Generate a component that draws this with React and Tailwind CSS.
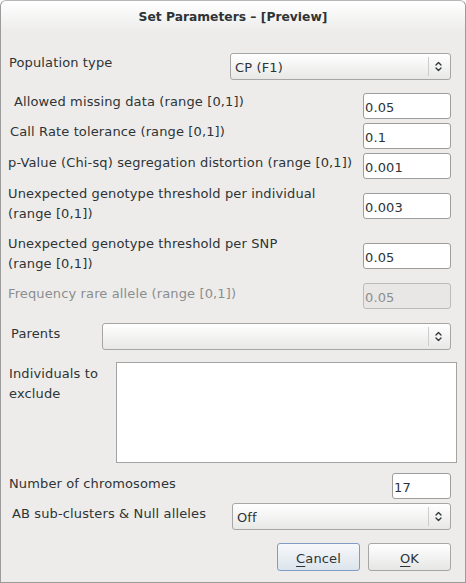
import React from "react";

function Arrows() {
  return (
    <svg width="7" height="11" viewBox="0 0 7 11" fill="none" stroke="#2e3436" strokeWidth="1.3" strokeLinecap="round" strokeLinejoin="round">
      <path d="M1 4 L3.5 1.5 L6 4" />
      <path d="M1 7 L3.5 9.5 L6 7" />
    </svg>
  );
}

function Combo({ value, className }) {
  return (
    <div className={`flex h-[27px] rounded-[3px] border border-[#a6a6a6] bg-gradient-to-b from-white to-[#e8e8e7] ${className}`}>
      <div className="flex-1 pl-[4px] pt-[6px] leading-[16px]">{value}</div>
      <div className="my-[3px] w-px bg-[#cdcdcd]" />
      <div className="flex w-[21px] items-center justify-center pr-[2px]">
        <Arrows />
      </div>
    </div>
  );
}

function Field({ value, className = "w-[88px]", disabled }) {
  return (
    <input
      readOnly
      disabled={disabled}
      value={value}
      className={`h-[26px] rounded-[3px] border px-[1px] pt-[5px] pb-[3px] text-[13px] leading-[16px] tracking-[0.13px] outline-none ${
        disabled
          ? "border-[#bcbcbc] bg-[#e8e7e6] text-[#8b8e8f]"
          : "border-[#9d9d9d] bg-white text-[#2e3436]"
      } ${className}`}
    />
  );
}

export default function App() {
  return (
    <div className="flex h-[583px] w-[466px] flex-col rounded-t-[6px] border border-[#9b9b9b] border-t-[#b8b8b8] bg-[#edeceb] font-['DejaVu_Sans',sans-serif] text-[13px] tracking-[0.13px] text-[#2e3436]">
      {/* title bar */}
      <div className="h-[31px] rounded-t-[6px] bg-gradient-to-b from-white to-[#edeceb] pt-[8px] text-center text-[12.3px] font-bold leading-[16px] tracking-normal">
        Set Parameters – [Preview]
      </div>

      <div className="flex flex-col pt-[21px]">
        <div className="flex h-[40px] items-start justify-between pr-[14px]">
          <span className="ml-[8px] mt-[2px] leading-[16px]">Population type</span>
          <Combo value="CP (F1)" className="w-[221px]" />
        </div>

        <div className="flex h-[30px] items-start justify-between pr-[14px]">
          <span className="ml-[13px] mt-[1px] leading-[16px]">Allowed missing data (range [0,1])</span>
          <Field value="0.05" />
        </div>

        <div className="flex h-[30px] items-start justify-between pr-[14px]">
          <span className="ml-[9px] mt-[1px] leading-[16px]">Call Rate tolerance (range [0,1])</span>
          <Field value="0.1" />
        </div>

        <div className="flex h-[30px] items-start justify-between pr-[14px]">
          <span className="ml-[7px] mt-[2px] leading-[16px]">p-Value (Chi-sq) segregation distortion (range [0,1])</span>
          <Field value="0.001" />
        </div>

        <div className="flex h-[50px] items-start justify-between pr-[14px]">
          <span className="ml-[7px] mt-[1px] leading-[20px]">
            Unexpected genotype threshold per individual
            <br />
            (range [0,1])
          </span>
          <Field value="0.003" className="mt-[10px] w-[88px]" />
        </div>

        <div className="flex h-[50px] items-start justify-between pr-[14px]">
          <span className="ml-[7px] mt-[1px] leading-[20px]">
            Unexpected genotype threshold per SNP
            <br />
            (range [0,1])
          </span>
          <Field value="0.05" className="mt-[10px] w-[88px]" />
        </div>

        <div className="flex h-[40px] items-start justify-between pr-[14px]">
          <span className="ml-[7px] mt-[3px] leading-[16px] text-[#8b8e8f]">Frequency rare allele (range [0,1])</span>
          <Field value="0.05" disabled />
        </div>

        <div className="flex h-[39px] items-start justify-between pr-[14px]">
          <span className="ml-[10px] mt-[3px] leading-[16px]">Parents</span>
          <Combo value="" className="w-[349px]" />
        </div>

        <div className="flex h-[111px] items-start justify-between pr-[8px]">
          <span className="ml-[8px] mt-[2px] leading-[20px]">
            Individuals to
            <br />
            exclude
          </span>
          <div className="h-[101px] w-[341px] border border-[#a3a3a3] bg-white" />
        </div>

        <div className="flex h-[30px] items-start justify-between pr-[14px]">
          <span className="ml-[8px] mt-[3px] leading-[16px]">Number of chromosomes</span>
          <Field value="17" className="w-[59px]" />
        </div>

        <div className="flex h-[40px] items-start justify-between pr-[14px]">
          <span className="ml-[11px] mt-[3px] leading-[16px]">AB sub-clusters &amp; Null alleles</span>
          <Combo value="Off" className="w-[219px]" />
        </div>

        <div className="flex h-[28px] justify-end gap-[8px] pr-[14px]">
          <button className="flex h-[28px] w-[83px] items-center justify-center rounded-[3px] border border-[#7f9cc4] bg-gradient-to-b from-[#f6f8fb] to-[#dde4ec] pt-[3px] leading-[16px] text-[#2e3436]">
            <span className="underline underline-offset-[3px]">C</span>ancel
          </button>
          <button className="flex h-[28px] w-[83px] items-center justify-center rounded-[3px] border border-[#a6a6a6] bg-gradient-to-b from-white to-[#e6e6e5] pt-[3px] leading-[16px] text-[#2e3436]">
            <span className="underline underline-offset-[3px]">O</span>K
          </button>
        </div>
      </div>
    </div>
  );
}
